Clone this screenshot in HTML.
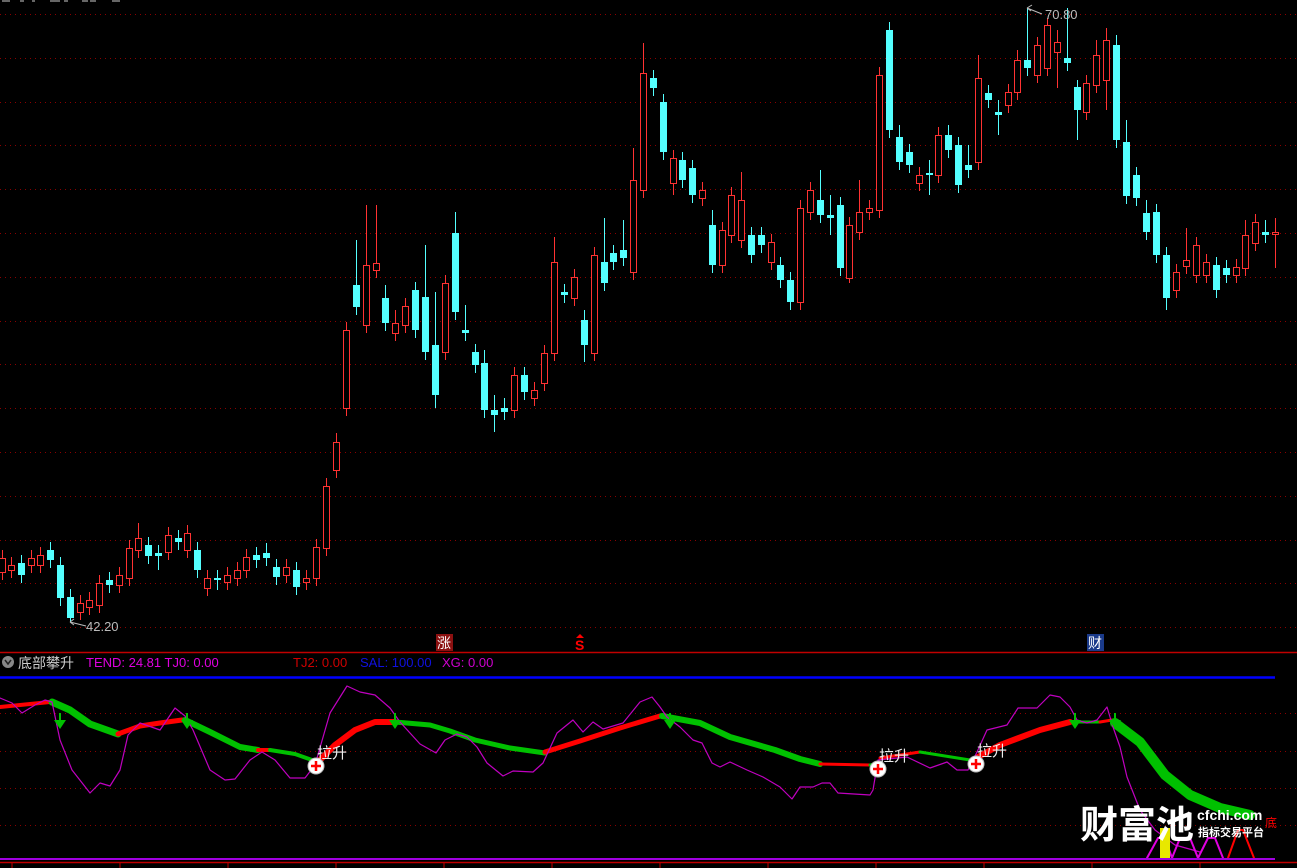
<!DOCTYPE html><html><head><meta charset="utf-8"><style>
html,body{margin:0;padding:0;background:#000;width:1297px;height:868px;overflow:hidden}
svg{display:block}
.t{font-family:"Liberation Sans","Noto Sans CJK SC",sans-serif}
</style></head><body>
<svg id="s" width="1297" height="868" xmlns="http://www.w3.org/2000/svg">
<g id="grid"></g>
<g id="candles"></g>
<text x="1045" y="19" fill="#bbb" font-size="13" class="t">70.80</text>
<path d="M1027 8 L1032 5 M1027 8 L1031 11 M1027 8 L1042 14" stroke="#bbb" fill="none"/>
<text x="86" y="631" fill="#bbb" font-size="13" class="t">42.20</text>
<path d="M70 622 L74 619 M70 622 L74 625 M70 622 L86 626" stroke="#bbb" fill="none"/>
<g fill="#666"><rect x="2" y="0" width="8" height="2"/><rect x="20" y="0" width="4" height="2"/><rect x="32" y="0" width="3" height="2"/><rect x="50" y="0" width="10" height="2"/><rect x="64" y="0" width="4" height="2"/><rect x="82" y="0" width="6" height="2"/><rect x="90" y="0" width="6" height="2"/><rect x="112" y="0" width="8" height="2"/></g>
<rect x="436" y="634" width="17" height="17" fill="#8b1010"/>
<text x="437" y="648" fill="#fff" font-size="14" class="t">涨</text>
<text x="575" y="650" fill="#f00" font-size="14" font-weight="bold" class="t">S</text>
<path d="M576 638 L580 634 L584 638Z" fill="#f00"/>
<rect x="1087" y="634" width="17" height="17" fill="#1a3a8a"/>
<text x="1088" y="648" fill="#fff" font-size="14" class="t">财</text>
<line x1="0" y1="652.5" x2="1297" y2="652.5" stroke="#c00000" stroke-width="1.5"/>
<circle cx="8" cy="662" r="6" fill="#888"/><path d="M5 660 L8 664 L11 660" stroke="#222" stroke-width="1.5" fill="none"/>
<text x="18" y="668" fill="#ccc" font-size="14" class="t">底部攀升</text>
<text x="86" y="667" fill="#e000e0" font-size="13" class="t">TEND: 24.81  TJ0: 0.00</text>
<text x="293" y="667" fill="#d00000" font-size="13" class="t">TJ2: 0.00</text>
<text x="360" y="667" fill="#1010e0" font-size="13" class="t">SAL: 100.00</text>
<text x="442" y="667" fill="#d000d0" font-size="13" class="t">XG: 0.00</text>
<line x1="0" y1="677.5" x2="1275" y2="677.5" stroke="#0000ff" stroke-width="2.5"/>
<g id="ind"></g>
<line x1="0" y1="859" x2="1275" y2="859" stroke="#a000e0" stroke-width="2"/>
<line x1="0" y1="862.5" x2="1297" y2="862.5" stroke="#c00000" stroke-width="1.5"/>
<g id="ticks"></g>
</svg>
<script>
var NS="http://www.w3.org/2000/svg";
function el(p,t,a){var e=document.createElementNS(NS,t);for(var k in a)e.setAttribute(k,a[k]);document.getElementById(p).appendChild(e);return e;}
for(var y=14;y<640;y+=43.8){el("grid","line",{x1:0,x2:1297,y1:Math.round(y)+.5,y2:Math.round(y)+.5,stroke:"#8a0000","stroke-dasharray":"1,4"});}
[713,751,788,825].forEach(function(y){el("grid","line",{x1:0,x2:1297,y1:y+.5,y2:y+.5,stroke:"#8a0000","stroke-dasharray":"1,4"});});
for(var x=12;x<1297;x+=108){el("ticks","line",{x1:x,x2:x,y1:862,y2:868,stroke:"#c00000"});}
var C=[[2,'r',558,572],[11,'r',565,570],[21,'c',563,575],[31,'r',558,565],[40,'r',555,565],[50,'c',550,560],[60,'c',565,598],[70,'c',597,618,0,622],[80,'r',603,612],[89,'r',600,607],[99,'r',583,605],[109,'c',580,585],[119,'r',575,585],[129,'r',548,578],[138,'r',538,550,523],[148,'c',545,556],[158,'c',553,556,545,570],[168,'r',535,552],[178,'c',538,542],[187,'r',533,550],[197,'c',550,570],[207,'r',578,588],[217,'c',578,580,0,590],[227,'r',575,582],[237,'r',570,578],[246,'r',557,570],[256,'c',555,560],[266,'c',553,558,543],[276,'c',567,577],[286,'r',567,575],[296,'c',570,587],[306,'r',578,582],[316,'r',547,578],[326,'r',486,548],[336,'r',442,470,433],[346,'r',330,408],[356,'c',285,307,240],[366,'r',265,325,205],[376,'r',263,270,205],[385,'c',298,323,285],[395,'r',323,333,310],[405,'r',306,325],[415,'c',290,330],[425,'c',297,352,245],[435,'c',345,395,292,408],[445,'r',283,352],[455,'c',233,312,212],[465,'c',330,333,305],[475,'c',352,365],[484,'c',363,410,350],[494,'c',410,415,395,432],[504,'c',408,412,398],[514,'r',375,410],[524,'c',375,392],[534,'r',390,398],[544,'r',353,383],[554,'r',262,353,237],[564,'c',292,295],[574,'r',277,298],[584,'c',320,345,310,362],[594,'r',255,353],[604,'c',262,283,218],[613,'c',253,262],[623,'c',250,258,220],[633,'r',180,272,148],[643,'r',73,190,43],[653,'c',78,88],[663,'c',102,152],[673,'r',158,183,150,195],[682,'c',160,180],[692,'c',168,195],[702,'r',190,198],[712,'c',225,265,210],[722,'r',230,265],[731,'r',195,235],[741,'r',200,240,172],[751,'c',235,255],[761,'c',235,245],[771,'r',242,262],[780,'c',265,280],[790,'c',280,302],[800,'r',208,302],[810,'r',190,212],[820,'c',200,215,170],[830,'c',215,218,195,235],[840,'c',205,268],[849,'r',225,278,0,283],[859,'r',212,232,180],[869,'r',208,212],[879,'r',75,210],[889,'c',30,130],[899,'c',137,162,125],[909,'c',152,165],[919,'r',175,183],[929,'c',173,175,160,195],[938,'r',135,175],[948,'c',135,150,125],[958,'c',145,185],[968,'c',165,170,145],[978,'r',78,162,55],[988,'c',93,100],[998,'c',112,115,100,135],[1008,'r',92,105],[1017,'r',60,92,50],[1027,'c',60,68,8],[1037,'r',45,75],[1047,'r',25,68,18],[1057,'r',42,52,30,88],[1067,'c',58,63,8],[1077,'c',87,110,80,140],[1086,'r',83,112],[1096,'r',55,85,40],[1106,'r',40,80,28,110],[1116,'c',45,140,35],[1126,'c',142,196,120],[1136,'c',175,198],[1146,'c',213,232,200],[1156,'c',212,255],[1166,'c',255,298,0,310],[1176,'r',272,290],[1186,'r',260,266,228],[1196,'r',245,275],[1206,'r',262,275],[1216,'c',265,290],[1226,'c',268,275],[1236,'r',267,275],[1245,'r',235,268,220],[1255,'r',222,243],[1265,'c',232,235,220],[1275,'r',232,234,218,268]];
C.forEach(function(c){
 var x=c[0],col=c[1]=='r'?'#ff3232':'#54ffff',t=c[2],b=c[3],h=c[4]||t-8,l=c[5]||b+8;
 el("candles","line",{x1:x+.5,x2:x+.5,y1:h,y2:l,stroke:col});
 if(c[1]=='r') el("candles","rect",{x:x-2.5,y:t+.5,width:6,height:Math.max(1,b-t),fill:"#000",stroke:col});
 else el("candles","rect",{x:x-3,y:t,width:7,height:Math.max(2,b-t),fill:col});
});
function pl(pts,col,w){el("ind","polyline",{points:pts.map(function(p){return p.join(",")}).join(" "),fill:"none",stroke:col,"stroke-width":w,"stroke-linejoin":"round","stroke-linecap":"round"});}
var G="#00c000",R="#ff0000";
pl([[0,707],[50,702]],R,4);
pl([[52,702],[70,710],[90,724],[118,734]],G,7);
pl([[118,734],[140,726],[160,723],[182,720]],R,5);
pl([[185,720],[210,732],[240,747],[258,750]],G,6);
pl([[258,750],[270,750]],R,4);
pl([[270,750],[295,754],[312,760]],G,4);
pl([[320,760],[335,745],[355,730],[375,722],[395,722]],R,6);
pl([[395,722],[430,725],[450,731],[475,740],[510,748],[545,753]],G,5);
pl([[545,752],[580,741],[620,728],[660,716]],R,5);
pl([[662,716],[700,723],[730,737],[775,750],[800,759],[820,764]],G,6);
pl([[820,764],[870,765]],R,3);
pl([[870,765],[880,762]],G,3);
pl([[880,758],[920,752]],R,3);
pl([[920,752],[970,760]],G,3);
pl([[978,757],[1000,745],[1040,730],[1070,722]],R,6);
pl([[1072,722],[1100,722]],G,3);
pl([[1100,722],[1112,720]],R,3);
pl([[1115,723],[1140,742],[1165,775],[1190,795],[1220,808],[1250,815]],G,10);
pl([[0,698],[12,703],[22,713],[35,705],[45,700],[52,702],[60,740],[72,770],[90,793],[100,783],[110,786],[120,770],[128,735],[140,723],[160,730],[175,708],[185,716],[193,730],[210,770],[225,780],[235,779],[250,760],[262,752],[275,760],[290,778],[305,778],[315,765],[330,713],[347,686],[360,692],[375,695],[390,708],[400,722],[420,744],[436,753],[445,740],[457,734],[467,737],[477,747],[487,763],[503,776],[513,771],[533,772],[543,763],[557,733],[573,720],[583,732],[593,722],[603,729],[623,723],[640,702],[652,697],[660,707],[667,717],[680,727],[693,740],[702,743],[712,763],[720,767],[730,762],[747,770],[763,777],[780,787],[792,799],[800,787],[813,787],[822,783],[830,783],[838,793],[870,795],[873,790],[878,760],[907,757],[930,768],[947,762],[957,770],[968,770],[977,752],[987,730],[1007,725],[1018,708],[1037,708],[1050,695],[1060,697],[1070,707],[1077,720],[1087,723],[1097,720],[1107,707],[1113,727],[1120,747],[1127,777],[1140,810],[1155,830],[1175,845],[1200,852]],"#c000c0",1.2);
pl([[1147,858],[1158,838],[1165,838],[1172,858],[1180,838],[1190,838],[1198,858],[1208,838],[1215,838],[1223,858]],"#e000e0",2);
pl([[1228,858],[1238,830],[1243,830],[1254,858]],"#ff0000",2);
el("ind","rect",{x:1160,y:828,width:10,height:31,fill:"#e8e800"});
[60,187,395,670,1075,1115].forEach(function(x){el("ind","line",{x1:x,x2:x,y1:713,y2:722,stroke:G,"stroke-width":2});el("ind","path",{d:"M"+(x-6)+" 720 L"+(x+6)+" 720 L"+x+" 729Z",fill:G});});
[[316,766],[878,769],[976,764]].forEach(function(p){el("ind","circle",{cx:p[0],cy:p[1],r:8,fill:"#fff",stroke:"#bbb"});el("ind","path",{d:"M"+(p[0]-5)+" "+p[1]+"h10M"+p[0]+" "+(p[1]-5)+"v10",stroke:"#f00","stroke-width":2.5});
 var t=el("ind","text",{x:p[0]+1,y:p[1]-8,fill:"#eee","font-size":"15","class":"t"});t.textContent="拉升";});
var w=el("ind","text",{x:1080,y:838,fill:"#fff","font-size":"38","font-weight":"bold","class":"t"});w.textContent="财富池";
var w2=el("ind","text",{x:1197,y:820,fill:"#fff","font-size":"14","font-weight":"bold","class":"t"});w2.textContent="cfchi.com";
var w3=el("ind","text",{x:1198,y:836,fill:"#fff","font-size":"11","font-weight":"bold","class":"t"});w3.textContent="指标交易平台";
var w4=el("ind","text",{x:1265,y:827,fill:"#f00","font-size":"12","class":"t"});w4.textContent="底";
</script>
</body></html>
